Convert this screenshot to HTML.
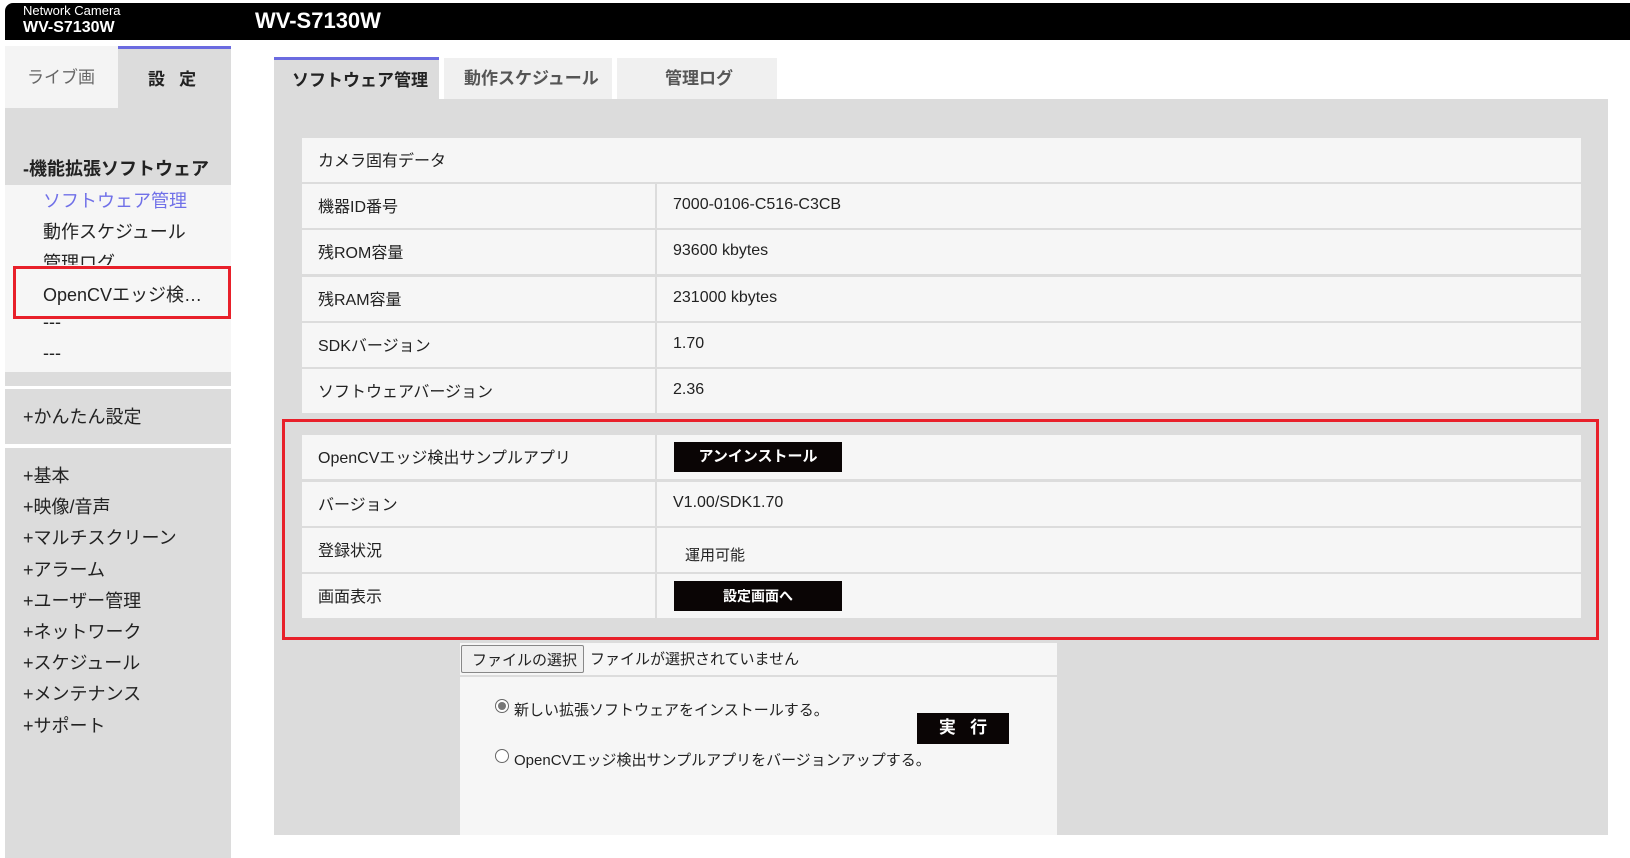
<!DOCTYPE html>
<html><head><meta charset="utf-8"><style>
*{margin:0;padding:0;box-sizing:border-box}
body{width:1630px;height:858px;background:#fff;font-family:"Liberation Sans","Noto Sans CJK JP",sans-serif;font-size:16px;color:#222;position:relative;overflow:hidden}
.a{position:absolute}
.hdr{left:5px;top:3px;width:1625px;height:37px;background:#000;border-top-left-radius:8px;color:#fff}
.side{left:5px;top:108px;width:226px;height:750px;background:#dcdcdc}
.row{position:absolute;left:302px;width:1279px;height:44px;background:#f6f6f6}
.row .l{position:absolute;left:16px;top:9px}
.row .v{position:absolute;left:353px;top:0;width:926px;height:44px;border-left:2px solid #dcdcdc;padding:12px 0 0 16px}
.btn{position:absolute;background:#0a0505;color:#fff;font-weight:bold;font-size:15px;text-align:center;line-height:30px}
.red{border:3px solid #e8202a}
.mi{position:absolute;left:23px;font-size:18px}
</style></head><body>
<div class="a hdr">
 <div class="a" style="left:18px;top:1px;font-size:13px;line-height:14px">Network Camera</div>
 <div class="a" style="left:18px;top:15px;font-size:16px;font-weight:bold;line-height:19px">WV-S7130W</div>
 <div class="a" style="left:250px;top:5px;font-size:22px;font-weight:bold;line-height:26px">WV-S7130W</div>
</div>
<div class="a" style="left:5px;top:46px;width:113px;height:62px;background:#f4f4f4;color:#666;font-size:17px;padding:17px 0 0 22px">ライブ画</div>
<div class="a" style="left:118px;top:46px;width:113px;height:62px;background:#dcdcdc;border-top:3px solid #6b6be0;font-size:17px;font-weight:bold;padding:16px 0 0 30px">設&nbsp;&nbsp;&nbsp;定</div>
<div class="a side"></div>
<div class="a" style="left:23px;top:155px;font-size:18px;font-weight:bold">-機能拡張ソフトウェア</div>
<div class="a" style="left:5px;top:185px;width:226px;height:187px;background:#f6f6f6"></div>
<div class="a" style="left:43px;top:187px;font-size:18px;color:#7070e8">ソフトウェア管理</div>
<div class="a" style="left:43px;top:218px;font-size:18px">動作スケジュール</div>
<div class="a" style="left:43px;top:249px;font-size:18px;height:16px;overflow:hidden">管理ログ</div>
<div class="a" style="left:43px;top:281px;font-size:18px">OpenCVエッジ検…</div>
<div class="a" style="left:43px;top:312px;font-size:18px">---</div>
<div class="a" style="left:43px;top:343px;font-size:18px">---</div>
<div class="a red" style="left:13px;top:266px;width:218px;height:53px"></div>
<div class="a" style="left:5px;top:386px;width:226px;height:3px;background:#fff"></div>
<div class="a" style="left:5px;top:444px;width:226px;height:4px;background:#fff"></div>
<div class="mi" style="top:403px">+かんたん設定</div>
<div class="mi" style="top:462px">+基本</div>
<div class="mi" style="top:493px">+映像/音声</div>
<div class="mi" style="top:524px">+マルチスクリーン</div>
<div class="mi" style="top:556px">+アラーム</div>
<div class="mi" style="top:587px">+ユーザー管理</div>
<div class="mi" style="top:618px">+ネットワーク</div>
<div class="mi" style="top:649px">+スケジュール</div>
<div class="mi" style="top:680px">+メンテナンス</div>
<div class="mi" style="top:712px">+サポート</div>

<div class="a" style="left:274px;top:57px;width:165px;height:45px;background:#dcdcdc;border-top:3px solid #6b6be0;font-size:17px;font-weight:bold;padding:6px 0 0 18px">ソフトウェア管理</div>
<div class="a" style="left:444px;top:58px;width:168px;height:41px;background:#f0f0f0;font-size:17px;font-weight:bold;color:#555;padding:6px 0 0 20px">動作スケジュール</div>
<div class="a" style="left:617px;top:58px;width:160px;height:41px;background:#f0f0f0;font-size:17px;font-weight:bold;color:#555;padding:6px 0 0 48px">管理ログ</div>
<div class="a" style="left:274px;top:99px;width:1334px;height:736px;background:#dcdcdc"></div>

<div class="row" style="top:138px"><span class="l">カメラ固有データ</span></div>
<div class="row" style="top:184px"><span class="l">機器ID番号</span><span class="v">7000-0106-C516-C3CB</span></div>
<div class="row" style="top:230px"><span class="l">残ROM容量</span><span class="v">93600 kbytes</span></div>
<div class="row" style="top:277px"><span class="l">残RAM容量</span><span class="v">231000 kbytes</span></div>
<div class="row" style="top:323px"><span class="l">SDKバージョン</span><span class="v">1.70</span></div>
<div class="row" style="top:369px"><span class="l">ソフトウェアバージョン</span><span class="v">2.36</span></div>

<div class="row" style="top:435px"><span class="l">OpenCVエッジ検出サンプルアプリ</span><span class="v"></span></div>
<div class="row" style="top:482px"><span class="l">バージョン</span><span class="v">V1.00/SDK1.70</span></div>
<div class="row" style="top:528px"><span class="l">登録状況</span><span class="v" style="padding:16px 0 0 28px;font-size:15px">運用可能</span></div>
<div class="row" style="top:574px"><span class="l">画面表示</span><span class="v"></span></div>
<div class="btn" style="left:674px;top:442px;width:168px;height:30px">アンインストール</div>
<div class="btn" style="left:674px;top:581px;width:168px;height:30px;font-size:14px">設定画面へ</div>
<div class="a red" style="left:282px;top:419px;width:1317px;height:221px"></div>

<div class="a" style="left:460px;top:643px;width:597px;height:32px;background:#f6f6f6"></div>
<div class="a" style="left:460px;top:677px;width:597px;height:158px;background:#f6f6f6"></div>
<div class="a" style="left:461px;top:645px;width:123px;height:28px;background:#efefef;border:1px solid #888;border-radius:2px;font-size:15px;padding:3px 0 0 10px">ファイルの選択</div>
<div class="a" style="left:590px;top:648px;font-size:15px">ファイルが選択されていません</div>
<div class="a" style="left:495px;top:699px;width:14px;height:14px;border:1px solid #666;border-radius:50%;background:#fff"><div class="a" style="left:2px;top:2px;width:8px;height:8px;border-radius:50%;background:#777"></div></div>
<div class="a" style="left:514px;top:699px;font-size:15px">新しい拡張ソフトウェアをインストールする。</div>
<div class="a" style="left:495px;top:749px;width:14px;height:14px;border:1px solid #666;border-radius:50%;background:#fff"></div>
<div class="a" style="left:514px;top:749px;font-size:15px">OpenCVエッジ検出サンプルアプリをバージョンアップする。</div>
<div class="btn" style="left:917px;top:713px;width:92px;height:31px;font-size:17px">実&nbsp;&nbsp;&nbsp;行</div>
</body></html>
